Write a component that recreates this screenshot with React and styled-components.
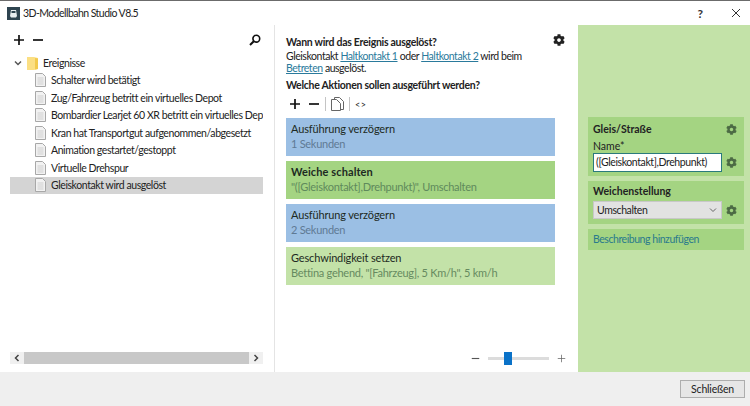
import styled, { createGlobalStyle } from 'styled-components';
import { FaCog } from 'react-icons/fa';

const Global = createGlobalStyle`
  html, body { margin: 0; padding: 0; background: #fff; }
  body { font-family: Lato, "Open Sans", sans-serif; font-size: 10.5px; color: #222; }
  * { box-sizing: border-box; }
`;

const Window = styled.div`
  width: 750px;
  height: 406px;
  display: flex;
  flex-direction: column;
  overflow: hidden;
  border-top: 1px solid #6b6b6b;
`;

const TitleBar = styled.div`
  height: 24px;
  flex: none;
  display: flex;
  align-items: center;
  padding: 0 2px 0 7px;
  gap: 3px;
  font-size: 10.5px;
  letter-spacing: -0.55px;
`;

const TitleText = styled.span`
  flex: 1;
`;

const TitleButton = styled.span`
  width: 24px;
  margin-left: 9px;
  font-size: 12px;
  font-weight: 700;
  color: #333;
  display: flex;
  justify-content: center;
`;

const Main = styled.div`
  flex: 1;
  display: flex;
  min-height: 0;
`;

const LeftPanel = styled.div`
  width: 275px;
  flex: none;
  display: flex;
  flex-direction: column;
  padding: 0 11px 8px 10px;
  border-right: 1px solid #e4e4e4;
`;

const TreeToolbar = styled.div`
  height: 29px;
  display: flex;
  align-items: center;
  justify-content: space-between;
  padding: 0 2px 0 3px;
`;

const IconGroup = styled.div`
  display: flex;
  align-items: center;
  gap: 7px;
`;

const Tree = styled.div`
  flex: 1;
  min-height: 0;
  overflow: hidden;
`;

const TreeRow = styled.div`
  height: 17.5px;
  display: flex;
  align-items: center;
  white-space: nowrap;
  overflow: hidden;
  font-size: 10.5px;
  letter-spacing: -0.42px;
  padding-left: ${(p) => (p.$root ? '4px' : '25px')};
  gap: 5px;
  background: ${(p) => (p.$selected ? '#d4d4d4' : 'transparent')};

  svg {
    flex: none;
  }
`;

const HScroll = styled.div`
  height: 12px;
  display: flex;
  align-items: stretch;
  background: #f0f0f0;
`;

const ScrollArrow = styled.div`
  width: 14px;
  display: flex;
  align-items: center;
  justify-content: center;
`;

const ScrollThumb = styled.div`
  flex: 1;
  background: #c8c8c8;
`;

const MiddlePanel = styled.div`
  width: 303px;
  flex: none;
  min-width: 0;
  display: flex;
  flex-direction: column;
  padding: 10px 23px 8px 11px;
  position: relative;
`;

const Heading = styled.div`
  font-weight: 700;
  font-size: 10.5px;
  line-height: 14px;
  letter-spacing: -0.28px;
  white-space: nowrap;
`;

const Paragraph = styled.div`
  font-size: 10.5px;
  line-height: 12px;
  letter-spacing: -0.45px;
  white-space: nowrap;
  margin: 1px 0 4px;
`;

const Link = styled.span`
  color: #2a7a9c;
  text-decoration: underline;
`;

const GearSpot = styled.div`
  position: absolute;
  top: 9px;
  left: 278px;
`;

const ActionBar = styled.div`
  height: 24px;
  display: flex;
  align-items: center;
  gap: 5px;
  padding-left: 3px;
`;

const Separator = styled.div`
  width: 1px;
  height: 14px;
  background: #c4c4c4;
`;

const CodeGlyph = styled.span`
  font-size: 9px;
  letter-spacing: 0.5px;
  color: #222;
`;

const Cards = styled.div`
  display: flex;
  flex-direction: column;
  gap: 5px;
  margin-top: 2px;
`;

const Card = styled.div`
  height: 38px;
  padding: 3px 5px;
  background: ${(p) => p.$bg};
  font-size: 11px;
  line-height: 15px;
  white-space: nowrap;
`;

const CardTitle = styled.div`
  font-weight: ${(p) => (p.$bold ? 700 : 400)};
  letter-spacing: ${(p) => (p.$bold ? '0.1px' : '-0.15px')};
  color: #1d2a22;
`;

const CardText = styled.div`
  color: ${(p) => p.$color};
  letter-spacing: -0.27px;
`;

const Zoom = styled.div`
  margin-top: auto;
  height: 12px;
  display: flex;
  align-items: center;
  justify-content: flex-end;
  gap: 8px;
  margin-right: -11px;
`;

const ZoomTrack = styled.div`
  width: 61px;
  height: 3px;
  background: #dcdcdc;
  position: relative;
`;

const ZoomThumb = styled.div`
  position: absolute;
  left: 16px;
  top: -5px;
  width: 8px;
  height: 13px;
  background: #0a72c8;
`;

const RightPanel = styled.div`
  width: 172px;
  flex: none;
  background: #c3e2a8;
  padding: 92px 6px 0 10px;
  display: flex;
  flex-direction: column;
  gap: 5px;
`;

const Section = styled.div`
  background: #a4d482;
  padding: ${(p) => p.$pad};
  display: flex;
  flex-direction: column;
`;

const SectionHead = styled.div`
  display: flex;
  align-items: center;
  justify-content: space-between;
  padding-right: 7px;
  height: 14px;
  font-weight: 700;
  font-size: 10.5px;
`;

const FieldLabel = styled.div`
  font-size: 10.5px;
  line-height: 14px;
  margin-top: 3px;
`;

const FieldRow = styled.div`
  display: flex;
  align-items: center;
  justify-content: space-between;
  padding-right: 7px;
  margin-top: ${(p) => p.$top || 0}px;
`;

const NameInput = styled.div`
  width: 129px;
  height: 19px;
  background: #fff;
  border: 1px solid #2a7a7c;
  padding: 0 2px;
  font-size: 10.5px;
  line-height: 17px;
  letter-spacing: -0.4px;
  white-space: nowrap;
`;

const SelectBox = styled.div`
  width: 129px;
  height: 18px;
  background: #e2e2e2;
  border: 1px solid #c8c8c8;
  padding: 0 4px 0 3px;
  font-size: 10.5px;
  letter-spacing: -0.4px;
  display: flex;
  align-items: center;
  justify-content: space-between;
`;

const AddLink = styled.div`
  color: #2a7a8c;
  font-size: 10.5px;
  letter-spacing: -0.45px;
  line-height: 21px;
`;

const Footer = styled.div`
  height: 34px;
  flex: none;
  background: #efefef;
  display: flex;
  align-items: center;
  justify-content: flex-end;
  padding: 0 5px 0 0;
`;

const CloseButton = styled.div`
  width: 65px;
  height: 18px;
  margin-top: -1px;
  background: #e6e6e6;
  border: 1px solid #adadad;
  font-size: 10.5px;
  letter-spacing: -0.2px;
  line-height: 16px;
  text-align: center;
`;

const Plus = ({ size = 12, color = '#111', width = 1.7 }) => (
  <svg width={size} height={size} viewBox="0 0 12 12">
    <path d="M1 6h10M6 1v10" stroke={color} strokeWidth={width} fill="none" />
  </svg>
);

const Minus = ({ size = 12, color = '#111', width = 1.7 }) => (
  <svg width={size} height={size} viewBox="0 0 12 12">
    <path d="M1 6h10" stroke={color} strokeWidth={width} fill="none" />
  </svg>
);

const Search = () => (
  <svg width="12" height="12" viewBox="0 0 12 12">
    <circle cx="7.3" cy="4.7" r="3.4" stroke="#111" strokeWidth="1.6" fill="none" />
    <path d="M4.8 7.2 1 11" stroke="#111" strokeWidth="2" fill="none" />
  </svg>
);

const FileIcon = () => (
  <svg width="11" height="14" viewBox="0 0 11 14">
    <path d="M.5.5h7l3 3v10H.5z" fill="#f2f2f2" stroke="#a8a8a8" />
    <path d="M2.5 5h6M2.5 7h6M2.5 9h6M2.5 11h6" stroke="#cfcfcf" />
  </svg>
);

const Folder = () => (
  <svg width="11" height="14" viewBox="0 0 11 14">
    <path d="M0 1h7l4 1v11l-4 1H0z" fill="#fbdf83" />
    <path d="M8 2l3 .5V13l-3 .6z" fill="#f2c94c" />
  </svg>
);

const Chevron = ({ d, stroke = '#555', size = 8, width = 1.5 }) => (
  <svg width={size} height={size} viewBox="0 0 8 8">
    <path d={d} stroke={stroke} strokeWidth={width} fill="none" />
  </svg>
);

const CopyIcon = () => (
  <svg width="13" height="14" viewBox="0 0 13 14">
    <path d="M3.5 2.5V.5h5l4 4v8h-3" fill="none" stroke="#666" />
    <path d="M.5 2.5h5l4 4v7h-9z" fill="#fff" stroke="#666" />
  </svg>
);

const AppIcon = () => (
  <svg width="13" height="13" viewBox="0 0 13 13">
    <rect width="13" height="13" fill="#2e4450" />
    <path d="M4 3h5l1 6-1 1.5H4L3 9z" fill="#e8eef0" />
    <rect x="4.5" y="4" width="4" height="2" fill="#2e4450" />
  </svg>
);

const treeItems = [
  'Schalter wird betätigt',
  'Zug/Fahrzeug betritt ein virtuelles Depot',
  'Bombardier Learjet 60 XR betritt ein virtuelles Depot',
  'Kran hat Transportgut aufgenommen/abgesetzt',
  'Animation gestartet/gestoppt',
  'Virtuelle Drehspur',
  'Gleiskontakt wird ausgelöst',
];

const cards = [
  { title: 'Ausführung verzögern', text: '1 Sekunden', bg: '#9bbfe4', color: '#5f7a94' },
  { title: 'Weiche schalten', text: '"([Gleiskontakt],Drehpunkt)", Umschalten', bg: '#a4d482', color: '#5f8a5c', bold: true },
  { title: 'Ausführung verzögern', text: '2 Sekunden', bg: '#9bbfe4', color: '#5f7a94' },
  { title: 'Geschwindigkeit setzen', text: 'Bettina gehend, "[Fahrzeug], 5 Km/h", 5 km/h', bg: '#c3e2a8', color: '#668a60' },
];

export default function App() {
  return (
    <Window>
      <Global />
      <TitleBar>
        <AppIcon />
        <TitleText>3D-Modellbahn Studio V8.5</TitleText>
        <TitleButton>?</TitleButton>
        <TitleButton>
          <svg width="10" height="10" viewBox="0 0 10 10">
            <path d="M1 1l8 8M9 1l-8 8" stroke="#333" strokeWidth="1" fill="none" />
          </svg>
        </TitleButton>
      </TitleBar>
      <Main>
        <LeftPanel>
          <TreeToolbar>
            <IconGroup>
              <Plus />
              <Minus />
            </IconGroup>
            <Search />
          </TreeToolbar>
          <Tree>
            <TreeRow $root>
              <Chevron d="M1 2.5l3 3 3-3" />
              <Folder />
              <span>Ereignisse</span>
            </TreeRow>
            {treeItems.map((item, i) => (
              <TreeRow key={item} $selected={i === treeItems.length - 1}>
                <FileIcon />
                <span>{item}</span>
              </TreeRow>
            ))}
          </Tree>
          <HScroll>
            <ScrollArrow>
              <Chevron d="M5.5 1l-3 3 3 3" stroke="#444" />
            </ScrollArrow>
            <ScrollThumb />
            <ScrollArrow>
              <Chevron d="M2.5 1l3 3-3 3" stroke="#444" />
            </ScrollArrow>
          </HScroll>
        </LeftPanel>
        <MiddlePanel>
          <GearSpot>
            <FaCog size={12} color="#222" />
          </GearSpot>
          <Heading>Wann wird das Ereignis ausgelöst?</Heading>
          <Paragraph>
            Gleiskontakt <Link>Haltkontakt 1</Link> oder <Link>Haltkontakt 2</Link> wird beim
            <br />
            <Link>Betreten</Link> ausgelöst.
          </Paragraph>
          <Heading>Welche Aktionen sollen ausgeführt werden?</Heading>
          <ActionBar>
            <IconGroup>
              <Plus />
              <Minus />
            </IconGroup>
            <Separator />
            <CopyIcon />
            <Separator />
            <CodeGlyph>&lt;&gt;</CodeGlyph>
          </ActionBar>
          <Cards>
            {cards.map((c, i) => (
              <Card key={i} $bg={c.bg}>
                <CardTitle $bold={c.bold}>{c.title}</CardTitle>
                <CardText $color={c.color}>{c.text}</CardText>
              </Card>
            ))}
          </Cards>
          <Zoom>
            <Minus size={9} color="#555" width={1.5} />
            <ZoomTrack>
              <ZoomThumb />
            </ZoomTrack>
            <Plus size={9} color="#666" width={1} />
          </Zoom>
        </MiddlePanel>
        <RightPanel>
          <Section $pad="5px 0 4px 5px">
            <SectionHead>
              <span>Gleis/Straße</span>
              <FaCog size={11} color="#4c6a44" />
            </SectionHead>
            <FieldLabel>Name*</FieldLabel>
            <FieldRow>
              <NameInput>([Gleiskontakt],Drehpunkt)</NameInput>
              <FaCog size={11} color="#4c6a44" />
            </FieldRow>
          </Section>
          <Section $pad="3px 0 5px 5px">
            <SectionHead>Weichenstellung</SectionHead>
            <FieldRow $top={3}>
              <SelectBox>
                <span>Umschalten</span>
                <Chevron d="M1 2.5l3 3 3-3" stroke="#666" width={1} />
              </SelectBox>
              <FaCog size={11} color="#4c6a44" />
            </FieldRow>
          </Section>
          <Section $pad="0 0 0 5px">
            <AddLink>Beschreibung hinzufügen</AddLink>
          </Section>
        </RightPanel>
      </Main>
      <Footer>
        <CloseButton>Schließen</CloseButton>
      </Footer>
    </Window>
  );
}
